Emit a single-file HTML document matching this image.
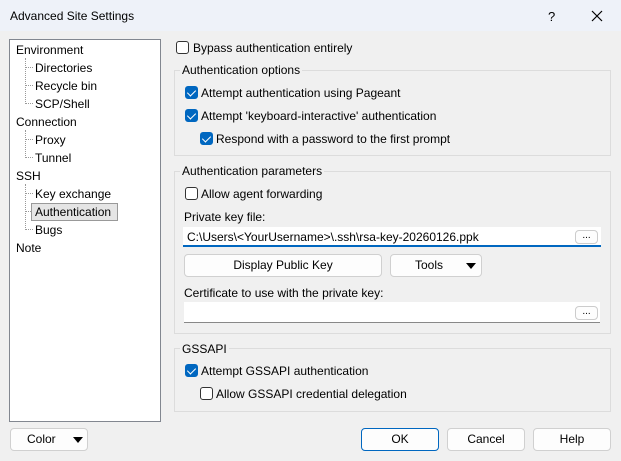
<!DOCTYPE html>
<html><head><style>
*{box-sizing:border-box;margin:0;padding:0}
body{width:621px;height:461px;background:#f0f0f0;font-family:"Liberation Sans",sans-serif;font-size:12px;color:#000;position:relative;overflow:hidden}
.a{position:absolute;white-space:nowrap}
.title{left:0;top:0;width:621px;height:31px;background:#eef2f9}
.tree{left:9px;top:39px;width:152px;height:383px;background:#fff;border:1px solid #828790}
.grp{position:absolute;border:1px solid #dcdcdc}
.lbl{background:#f0f0f0;padding:0 2px}
.cb{position:absolute;width:13px;height:13px;border:1px solid #333;border-radius:3px;background:#fff}
.cb.on{background:#0067c0;border-color:#0067c0}
.cb.on:after{content:"";position:absolute;left:3px;top:1px;width:4px;height:7px;border:solid #fff;border-width:0 1.5px 1.5px 0;transform:rotate(45deg)}
.btn{position:absolute;background:#fdfdfd;border:1px solid #d0d0d0;border-radius:4px;text-align:center}
.inp{position:absolute;background:#fff;border-bottom:1px solid #888}
.dots{position:absolute;width:23px;height:14px;border:1px solid #ccc;border-radius:4px;background:#fdfdfd;font-size:10px;text-align:center;line-height:10px}
.tri{position:absolute;width:0;height:0;border-left:5px solid transparent;border-right:5px solid transparent;border-top:6px solid #000}
.dl{position:absolute;border-left:1px dotted #999}
.dh{position:absolute;border-top:1px dotted #999;width:8px}
</style></head><body>
<div class="a title"></div>
<div class="a" style="left:10px;top:9px">Advanced Site Settings</div>
<div class="a" style="left:548px;top:9px;font-size:13px">?</div>
<svg class="a" style="left:591px;top:10px" width="12" height="12"><path d="M1 1L11 11M11 1L1 11" stroke="#000" stroke-width="1.2"/></svg>

<div class="a tree"></div>
<div class="dl" style="left:25px;top:58px;height:46px"></div>
<div class="dh" style="left:25px;top:67px"></div><div class="dh" style="left:25px;top:85px"></div><div class="dh" style="left:25px;top:103px"></div>
<div class="dl" style="left:25px;top:130px;height:28px"></div>
<div class="dh" style="left:25px;top:139px"></div><div class="dh" style="left:25px;top:157px"></div>
<div class="dl" style="left:25px;top:184px;height:46px"></div>
<div class="dh" style="left:25px;top:193px"></div><div class="dh" style="left:25px;top:211px"></div><div class="dh" style="left:25px;top:229px"></div>
<div class="a" style="left:31px;top:203px;width:87px;height:18px;background:#e5e5e5;border:1px solid #999"></div>
<div class="a" style="left:16px;top:43px">Environment</div>
<div class="a" style="left:35px;top:61px">Directories</div>
<div class="a" style="left:35px;top:79px">Recycle bin</div>
<div class="a" style="left:35px;top:97px">SCP/Shell</div>
<div class="a" style="left:16px;top:115px">Connection</div>
<div class="a" style="left:35px;top:133px">Proxy</div>
<div class="a" style="left:35px;top:151px">Tunnel</div>
<div class="a" style="left:16px;top:169px">SSH</div>
<div class="a" style="left:35px;top:187px">Key exchange</div>
<div class="a" style="left:35px;top:205px">Authentication</div>
<div class="a" style="left:35px;top:223px">Bugs</div>
<div class="a" style="left:16px;top:241px">Note</div>

<div class="cb" style="left:176px;top:41px"></div>
<div class="a" style="left:193px;top:41px">Bypass authentication entirely</div>

<div class="grp" style="left:174px;top:70px;width:437px;height:86px"></div>
<div class="a lbl" style="left:180px;top:63px">Authentication options</div>
<div class="cb on" style="left:185px;top:86px"></div>
<div class="a" style="left:201px;top:86px">Attempt authentication using Pageant</div>
<div class="cb on" style="left:185px;top:109px"></div>
<div class="a" style="left:201px;top:109px">Attempt 'keyboard-interactive' authentication</div>
<div class="cb on" style="left:200px;top:132px"></div>
<div class="a" style="left:216px;top:132px">Respond with a password to the first prompt</div>

<div class="grp" style="left:174px;top:171px;width:437px;height:163px"></div>
<div class="a lbl" style="left:180px;top:164px">Authentication parameters</div>
<div class="cb" style="left:185px;top:187px"></div>
<div class="a" style="left:201px;top:187px">Allow agent forwarding</div>
<div class="a" style="left:184px;top:210px">Private key file:</div>
<div class="inp" style="left:183px;top:227px;width:418px;height:20px;border-bottom:2px solid #0067c0"></div>
<div class="a" style="left:187px;top:230px">C:\Users\&lt;YourUsername&gt;\.ssh\rsa-key-20260126.ppk</div>
<div class="dots" style="left:575px;top:230px">...</div>
<div class="btn" style="left:184px;top:254px;width:198px;height:23px;line-height:21px">Display Public Key</div>
<div class="btn" style="left:390px;top:254px;width:92px;height:23px;line-height:21px;text-align:left;padding-left:24px">Tools</div>
<div class="tri" style="left:466px;top:263px"></div>
<div class="a" style="left:184px;top:286px">Certificate to use with the private key:</div>
<div class="inp" style="left:184px;top:302px;width:416px;height:21px"></div>
<div class="dots" style="left:575px;top:306px">...</div>

<div class="grp" style="left:174px;top:348px;width:437px;height:64px"></div>
<div class="a lbl" style="left:180px;top:342px">GSSAPI</div>
<div class="cb on" style="left:185px;top:364px"></div>
<div class="a" style="left:201px;top:364px">Attempt GSSAPI authentication</div>
<div class="cb" style="left:200px;top:387px"></div>
<div class="a" style="left:216px;top:387px">Allow GSSAPI credential delegation</div>

<div class="btn" style="left:10px;top:428px;width:78px;height:23px;line-height:21px;text-align:left;padding-left:16px">Color</div>
<div class="tri" style="left:73px;top:437px"></div>
<div class="btn" style="left:361px;top:428px;width:78px;height:23px;line-height:21px;border:1px solid #0067c0">OK</div>
<div class="btn" style="left:447px;top:428px;width:78px;height:23px;line-height:21px">Cancel</div>
<div class="btn" style="left:533px;top:428px;width:78px;height:23px;line-height:21px">Help</div>
</body></html>
